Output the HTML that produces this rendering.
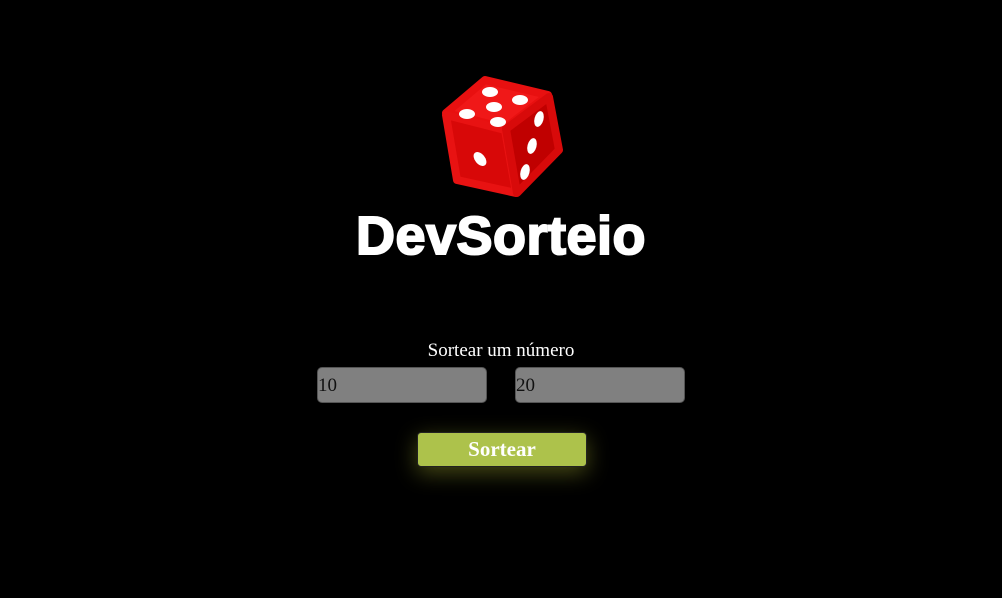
<!DOCTYPE html>
<html><head><meta charset="utf-8"><style>
body{margin:0;background:#000;width:1002px;height:598px;overflow:hidden;position:relative;font-family:"Liberation Serif",serif}
h1{position:absolute;left:0;width:1002px;top:205px;margin:0;text-align:center;font:bold 54px "Liberation Sans",sans-serif;color:#fff;-webkit-text-stroke:2px #fff;letter-spacing:0.5px}
.lbl{position:absolute;top:340px;left:0;width:1002px;text-align:center;color:#fff;font-size:19px}
.in{position:absolute;top:367px;width:170px;height:36px;background:#808080;border:1px solid #555;border-radius:5px;box-sizing:border-box;font:19px "Liberation Serif",serif;color:#111;line-height:36px;padding-left:0}
.btn{position:absolute;left:417px;top:432px;width:170px;height:35px;background:#adc24b;border-radius:4px;border:1px solid #222;box-sizing:border-box;color:#fff;font:bold 21px "Liberation Serif",serif;text-align:center;line-height:33px;box-shadow:0 6px 22px rgba(200,210,60,.35)}
</style></head><body>
<svg style="position:absolute;left:0;top:0" width="1002" height="598">
<g stroke-linejoin="round">
<polygon points="485,80 548,95 505,128 446,113" fill="#f01818" stroke="#e81010" stroke-width="8"/>
<polygon points="446,115 505,130 516,193 457,180" fill="#d80808" stroke="#e81212" stroke-width="8"/>
<polygon points="506,129 549,97 559,150 517,193" fill="#c00000" stroke="#d80a0a" stroke-width="8"/>
</g>
<g fill="#fff">
<ellipse cx="490" cy="92" rx="8" ry="5"/>
<ellipse cx="520" cy="100" rx="8" ry="5"/>
<ellipse cx="494" cy="107" rx="8" ry="5"/>
<ellipse cx="467" cy="114" rx="8" ry="5"/>
<ellipse cx="498" cy="122" rx="8" ry="5"/>
<ellipse cx="480" cy="159" rx="5" ry="8" transform="rotate(-40 480 159)"/>
<ellipse cx="539" cy="119" rx="4.5" ry="8" transform="rotate(15 539 119)"/>
<ellipse cx="532" cy="146" rx="4.5" ry="8" transform="rotate(15 532 146)"/>
<ellipse cx="525" cy="172" rx="4.5" ry="8" transform="rotate(15 525 172)"/>
</g>
</svg>
<h1>DevSorteio</h1>
<div class="lbl">Sortear um número</div>
<div class="in" style="left:317px">10</div>
<div class="in" style="left:515px">20</div>
<div class="btn">Sortear</div>
</body></html>
